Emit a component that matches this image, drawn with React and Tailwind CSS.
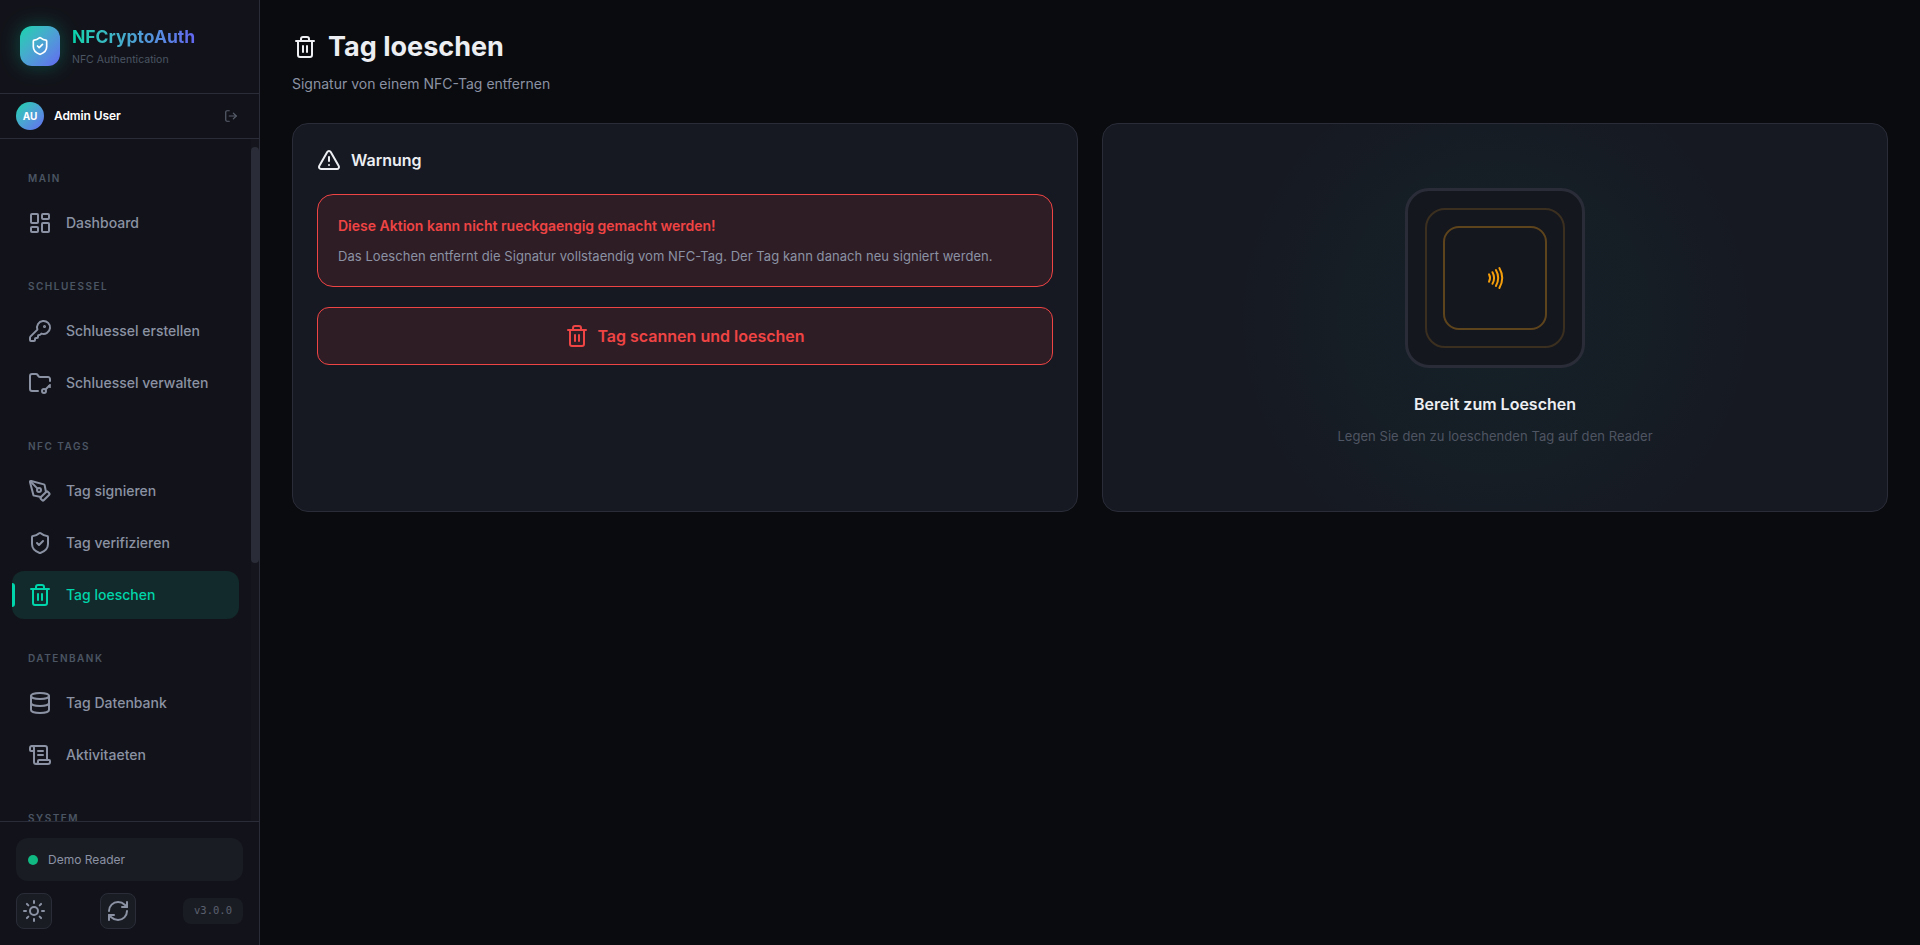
import React from "react";
import {
  LayoutDashboard,
  KeyRound,
  FolderKey,
  PenTool,
  ShieldCheck,
  Trash2,
  Database,
  ScrollText,
  Sun,
  RefreshCw,
  LogOut,
  TriangleAlert,
  Nfc,
} from "lucide-react";

const NAV = [
  { title: "MAIN", items: [{ label: "Dashboard", icon: LayoutDashboard }] },
  {
    title: "SCHLUESSEL",
    items: [
      { label: "Schluessel erstellen", icon: KeyRound },
      { label: "Schluessel verwalten", icon: FolderKey },
    ],
  },
  {
    title: "NFC TAGS",
    items: [
      { label: "Tag signieren", icon: PenTool },
      { label: "Tag verifizieren", icon: ShieldCheck },
      { label: "Tag loeschen", icon: Trash2, active: true },
    ],
  },
  {
    title: "DATENBANK",
    items: [
      { label: "Tag Datenbank", icon: Database },
      { label: "Aktivitaeten", icon: ScrollText },
    ],
  },
  { title: "SYSTEM", items: [] },
];

const NavItem = ({ item }) => {
  const Icon = item.icon;
  if (item.active) {
    return (
      <div className="relative flex h-12 items-center gap-[14px] rounded-xl bg-[#122a2b] px-4 text-[#00d4aa]">
        <span className="absolute top-3 left-0 h-6 w-[3px] rounded-r bg-[#00d4aa]" />
        <Icon size={24} strokeWidth={2} />
        <span className="text-sm font-medium">{item.label}</span>
      </div>
    );
  }
  return (
    <div className="flex h-12 items-center gap-[14px] rounded-xl px-4 text-[#8b92a3]">
      <Icon size={24} strokeWidth={2} />
      <span className="text-sm font-medium">{item.label}</span>
    </div>
  );
};

const Sidebar = () => {
  return (
    <aside className="flex h-screen w-[260px] shrink-0 flex-col border-r border-[#2a2d38] bg-[#12131a]">
      <div className="flex h-[94px] shrink-0 items-center gap-3 border-b border-[#2a2d38] px-5 pb-[1px]">
        <div className="flex h-10 w-10 items-center justify-center rounded-xl bg-gradient-to-br from-[#00d4aa] to-[#6366f1] text-white shadow-[0_0_20px_rgba(0,212,170,0.3)]">
          <ShieldCheck size={20} strokeWidth={2} />
        </div>
        <div className="flex flex-col gap-[3px]">
          <span className="bg-gradient-to-r from-[#00d4aa] to-[#6366f1] bg-clip-text text-[17.5px] leading-6 font-bold text-transparent">
            NFCryptoAuth
          </span>
          <span className="text-[10.5px] leading-4 text-[#4b5563]">NFC Authentication</span>
        </div>
      </div>

      <div className="flex h-[45px] shrink-0 items-center gap-[10px] border-b border-[#2a2d38] px-4">
        <div className="flex h-7 w-7 items-center justify-center rounded-full bg-gradient-to-br from-[#00d4aa] to-[#6366f1] text-[10px] font-bold text-white">
          AU
        </div>
        <span className="flex-1 text-xs font-semibold tracking-[-0.1px] text-white">Admin User</span>
        <LogOut size={14} className="mr-[5px] text-[#5a606e]" />
      </div>

      <div className="relative min-h-0 flex-1">
        <nav className="h-full overflow-hidden pt-[31px] pr-5 pl-3">
          {NAV.map((section) => (
            <div key={section.title} className="mb-[31px]">
              <div className="mb-[13px] h-4 pl-4 text-[10px] leading-4 font-semibold tracking-[0.15em] text-[#4b5563]">
                {section.title}
              </div>
              <div className="flex flex-col gap-1">
                {section.items.map((item) => (
                  <NavItem key={item.label} item={item} />
                ))}
              </div>
            </div>
          ))}
        </nav>
        {/* scrollbar, headless chromium hides the real one */}
        <div className="absolute top-0 right-0 bottom-0 w-2 bg-[#15161d]">
          <div className="mt-2 h-[416px] rounded bg-[#2a2d38]" />
        </div>
      </div>

      <div className="shrink-0 border-t border-[#2a2d38] px-4 pt-4 pb-4">
        <div className="flex h-[43px] items-center gap-[10px] rounded-xl bg-[#1a1c24] px-3">
          <span className="h-[10px] w-[10px] rounded-full bg-[#10b981]" />
          <span className="text-xs text-[#8b92a3]">Demo Reader</span>
        </div>
        <div className="mt-[12px] flex items-center justify-between">
          <button className="flex h-9 w-9 items-center justify-center rounded-lg border border-[#2a2d38] bg-[#1a1c24] text-[#8b92a3]">
            <Sun size={24} strokeWidth={2} />
          </button>
          <button className="flex h-9 w-9 items-center justify-center rounded-lg border border-[#2a2d38] bg-[#1a1c24] text-[#8b92a3]">
            <RefreshCw size={24} strokeWidth={2} />
          </button>
          <span className="flex h-[26px] w-[60px] items-center justify-center rounded-lg bg-[#1a1c24] font-['DejaVu_Sans_Mono',monospace] text-[10.5px] text-[#5a606e]">
            v3.0.0
          </span>
        </div>
      </div>
    </aside>
  );
};

const App = () => {
  return (
    <div className="flex h-screen overflow-hidden bg-[#0a0b0e] font-['Inter',sans-serif]">
      <Sidebar />
      <main className="min-w-0 flex-1 px-8 pt-[28px]">
        <div className="flex h-9 items-center gap-[11px] pt-[1px] pl-[1px] text-[#eceef2]">
          <Trash2 size={24} strokeWidth={2} />
          <h1 className="text-[27px] leading-9 font-bold">Tag loeschen</h1>
        </div>
        <p className="mt-[10px] text-sm leading-5 text-[#8b92a3]">Signatur von einem NFC-Tag entfernen</p>

        <div className="mt-[29px] grid h-[389px] grid-cols-2 gap-6">
          <section className="rounded-2xl border border-[#2a2d38] bg-[#161922] p-6">
            <div className="flex h-6 items-center gap-[10px] text-[#eceef2]">
              <TriangleAlert size={24} strokeWidth={2} />
              <h2 className="text-base font-semibold">Warnung</h2>
            </div>
            <div className="mt-[22px] flex h-[93px] flex-col justify-center gap-[10px] rounded-2xl border border-[#ef4444] bg-[#2f1d26] px-5">
              <p className="text-sm leading-5 font-semibold text-[#ef4444]">Diese Aktion kann nicht rueckgaengig gemacht werden!</p>
              <p className="text-[13px] leading-5 tracking-[0.05px] text-[#8b92a3]">
                Das Loeschen entfernt die Signatur vollstaendig vom NFC-Tag. Der Tag kann danach neu signiert werden.
              </p>
            </div>
            <button className="mt-5 flex h-[58px] w-full items-center justify-center gap-2 rounded-xl border border-[#ef4444] bg-[#2f1d26] text-base font-semibold text-[#ef4444]">
              <Trash2 size={24} strokeWidth={2} />
              Tag scannen und loeschen
            </button>
          </section>

          <section className="flex flex-col items-center rounded-2xl border border-[#2a2d38] bg-[#161922] bg-[radial-gradient(circle_at_center,rgba(0,212,170,0.04)_0%,rgba(0,212,170,0.025)_35%,transparent_60%)] pt-[64px]">
            <div className="flex h-[180px] w-[180px] items-center justify-center rounded-3xl border-[3px] border-[#2a2d38] bg-[#15171e]">
              <div className="flex h-[140px] w-[140px] items-center justify-center rounded-[20px] border-2 border-[#3b2f20]">
                <div className="flex h-[104px] w-[104px] items-center justify-center rounded-2xl border-2 border-[#5e441c] text-[#f59e0b]">
                  <Nfc size={24} strokeWidth={2} />
                </div>
              </div>
            </div>
            <h3 className="mt-[24px] text-base leading-6 font-semibold text-[#eceef2]">Bereit zum Loeschen</h3>
            <p className="mt-[10px] text-[13px] leading-5 tracking-[0.05px] text-[#4f5562]">Legen Sie den zu loeschenden Tag auf den Reader</p>
          </section>
        </div>
      </main>
    </div>
  );
};

export default App;
